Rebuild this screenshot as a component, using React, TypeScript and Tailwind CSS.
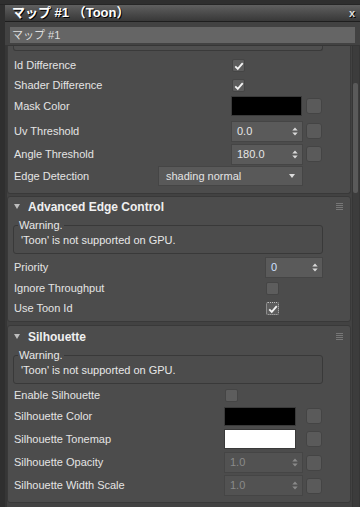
import React from "react";

const font = "font-['Liberation_Sans','Noto_Sans_CJK_JP',sans-serif]";

const Check = ({ checked = false, focus = false }: { checked?: boolean; focus?: boolean }) => (
  <div
    className={`relative h-[13px] w-[13px] rounded-[2px] border bg-[#5d5d5d] ${
      focus ? "border-dotted border-[#bdbdbd]" : "border-[#454545]"
    }`}
  >
    {checked && (
      <svg viewBox="0 0 12 12" className="absolute left-[1px] top-[1px] h-[10px] w-[10px]">
        <path d="M1.5 6.5 L4.5 9.5 L10.5 2.5" fill="none" stroke="#f2f2f2" strokeWidth="2.2" />
      </svg>
    )}
  </div>
);

const Square = () => (
  <div className="h-[16px] w-[16px] rounded-[3px] border border-[#444] bg-[#5a5a5a]" />
);

const Spinner = ({
  value,
  w,
  disabled = false,
  focus = false,
}: {
  value: string;
  w: string;
  disabled?: boolean;
  focus?: boolean;
}) => (
  <div
    className={`flex h-[21px] items-center justify-between border border-[#454545] pl-[5px] pr-[4px] ${w} ${
      disabled ? "bg-[#525252] text-[#8a8a8a]" : "bg-[#5a5a5a] text-[#e6e6e6]"
    }`}
  >
    <span className={focus ? "text-[#cfe0ff]" : ""}>{value}</span>
    <svg viewBox="0 0 6 10" className="h-[9px] w-[6px]">
      <path d="M0 4 L3 0.5 L6 4 Z M0 6 L3 9.5 L6 6 Z" fill={disabled ? "#8a8a8a" : "#d8d8d8"} />
    </svg>
  </div>
);

const Swatch = ({ white = false, w }: { white?: boolean; w: string }) => (
  <div
    className={`border border-[#3a3a3a] ${w} ${white ? "bg-white" : "bg-black"}`}
  />
);

const Menu = () => (
  <svg viewBox="0 0 7 7" className="h-[7px] w-[7px]">
    <rect x="0" y="0" width="7" height="1" fill="#777" />
    <rect x="0" y="2" width="7" height="1" fill="#777" />
    <rect x="0" y="4" width="7" height="1" fill="#777" />
    <rect x="0" y="6" width="7" height="1" fill="#777" />
  </svg>
);

const Header = ({ title }: { title: string }) => (
  <div className="flex h-[19px] items-center justify-between pl-[6px] pr-[7px]">
    <div className="flex items-center gap-[8px]">
      <svg viewBox="0 0 6 5" className="h-[5px] w-[6px]">
        <path d="M0 0 L6 0 L3 5 Z" fill="#bdbdbd" />
      </svg>
      <span className="text-[12px] font-bold text-[#f0f0f0]">{title}</span>
    </div>
    <Menu />
  </div>
);

const Warning = () => (
  <div className="relative ml-[5px] mr-[27px] mt-[9px] h-[29px] rounded-[3px] border border-[#393939]">
    <span className="absolute left-[4px] top-[-7px] bg-[#4c4c4c] px-[1px] leading-[13px] text-[#e8e8e8]">
      Warning.
    </span>
    <div className="pl-[7px] pt-[8px] leading-[13px] text-[#e8e8e8]">'Toon' is not supported on GPU.</div>
  </div>
);

const Row = ({
  label,
  lw,
  h,
  children,
}: {
  label: string;
  lw: string;
  h: string;
  children?: React.ReactNode;
}) => (
  <div className={`flex items-center ${h}`}>
    <div className={`shrink-0 pl-[6px] ${lw}`}>{label}</div>
    {children}
  </div>
);

export default function App() {
  return (
    <div className={`flex h-[507px] w-[360px] flex-col overflow-hidden bg-[#2f2f2f] text-[11px] text-[#e4e4e4] ${font}`}>
      <div className="h-[5px] shrink-0 border-b border-[#262626]" />
      <div className="ml-[5px] flex h-[17px] shrink-0 items-center justify-between border-b border-[#1e1e1e] bg-gradient-to-b from-[#606060] to-[#383838] pl-[7px] pr-[5px]">
        <span className="text-[13px] font-bold text-white [text-shadow:1px_1px_0_#000]">マップ #1 （Toon）</span>
        <span className="text-[11px] font-bold leading-none text-[#ddd] [text-shadow:1px_1px_0_#000]">x</span>
      </div>
      <div className="ml-[5px] flex flex-1 flex-col bg-[#424242]">
        <div className="px-[5px] pt-[5px]">
          <div className="flex h-[16px] items-center bg-[#656565] pl-[2px] text-[#dedede]">マップ #1</div>
        </div>
        <div className="mt-[2px] flex flex-1 overflow-hidden border-l-2 border-t border-[#363636]">
          <div className="flex w-[344px] shrink-0 flex-col">
            {/* scrolled section */}
            <div className="h-[148px] shrink-0 rounded-b-[3px] border border-t-0 border-[#393939] bg-[#4c4c4c]">
              <div className="ml-[5px] mr-[27px] h-[5px] rounded-b-[3px] border border-t-0 border-[#3a3a3a] bg-[#4f4f4f]" />
              <Row label="Id Difference" lw="w-[224px]" h="h-[20px] mt-[4px]">
                <Check checked />
              </Row>
              <Row label="Shader Difference" lw="w-[224px]" h="h-[20px]">
                <Check checked />
              </Row>
              <Row label="Mask Color" lw="w-[223px]" h="h-[22px]">
                <div className="flex h-[20px] items-center gap-[4px]">
                  <Swatch w="w-[71px] h-[20px]" />
                  <Square />
                </div>
              </Row>
              <Row label="Uv Threshold" lw="w-[223px]" h="h-[24px] mt-[2px]">
                <div className="flex items-center gap-[3px]">
                  <Spinner value="0.0" w="w-[72px]" />
                  <Square />
                </div>
              </Row>
              <Row label="Angle Threshold" lw="w-[223px]" h="h-[22px]">
                <div className="flex items-center gap-[3px]">
                  <Spinner value="180.0" w="w-[72px]" />
                  <Square />
                </div>
              </Row>
              <Row label="Edge Detection" lw="w-[150px]" h="h-[22px]">
                <div className="flex h-[20px] w-[145px] items-center justify-between border border-[#454545] bg-[#595959] pl-[7px] pr-[7px]">
                  <span>shading normal</span>
                  <svg viewBox="0 0 6 4" className="h-[4px] w-[6px]">
                    <path d="M0 0 L6 0 L3 4 Z" fill="#dcdcdc" />
                  </svg>
                </div>
              </Row>
            </div>

            {/* Advanced Edge Control */}
            <div className="mt-[2px] h-[126px] shrink-0 rounded-[3px] border border-[#393939] bg-[#4c4c4c]">
              <Header title="Advanced Edge Control" />
              <Warning />
              <Row label="Priority" lw="w-[257px]" h="h-[22px] mt-[2px]">
                <Spinner value="0" w="w-[58px]" focus />
              </Row>
              <Row label="Ignore Throughput" lw="w-[258px]" h="h-[20px]">
                <Check />
              </Row>
              <Row label="Use Toon Id" lw="w-[258px]" h="h-[20px]">
                <Check checked focus />
              </Row>
            </div>

            {/* Silhouette */}
            <div className="mt-[3px] h-[178px] shrink-0 rounded-[3px] border border-[#393939] bg-[#4c4c4c] pt-[1px]">
              <Header title="Silhouette" />
              <Warning />
              <Row label="Enable Silhouette" lw="w-[217px]" h="h-[20px] mt-[1px]">
                <Check />
              </Row>
              <Row label="Silhouette Color" lw="w-[216px]" h="h-[22px]">
                <div className="flex items-center gap-[10px]">
                  <Swatch w="w-[72px] h-[19px]" />
                  <Square />
                </div>
              </Row>
              <Row label="Silhouette Tonemap" lw="w-[216px]" h="h-[24px]">
                <div className="flex items-center gap-[10px]">
                  <Swatch white w="w-[72px] h-[20px]" />
                  <Square />
                </div>
              </Row>
              <Row label="Silhouette Opacity" lw="w-[216px]" h="h-[23px]">
                <div className="flex items-center gap-[3px]">
                  <Spinner value="1.0" w="w-[79px]" disabled />
                  <Square />
                </div>
              </Row>
              <Row label="Silhouette Width Scale" lw="w-[216px]" h="h-[23px]">
                <div className="flex items-center gap-[3px]">
                  <Spinner value="1.0" w="w-[79px]" disabled />
                  <Square />
                </div>
              </Row>
            </div>
          </div>
          {/* scrollbar */}
          <div className="ml-[1px] flex w-[8px] shrink-0 flex-col border-x border-[#363636] bg-[#3c3c3c]">
            <div className="mt-[37px] h-[110px] w-[5px] rounded-[2px] bg-[#5a5a5a]" />
          </div>
        </div>
      </div>
    </div>
  );
}
